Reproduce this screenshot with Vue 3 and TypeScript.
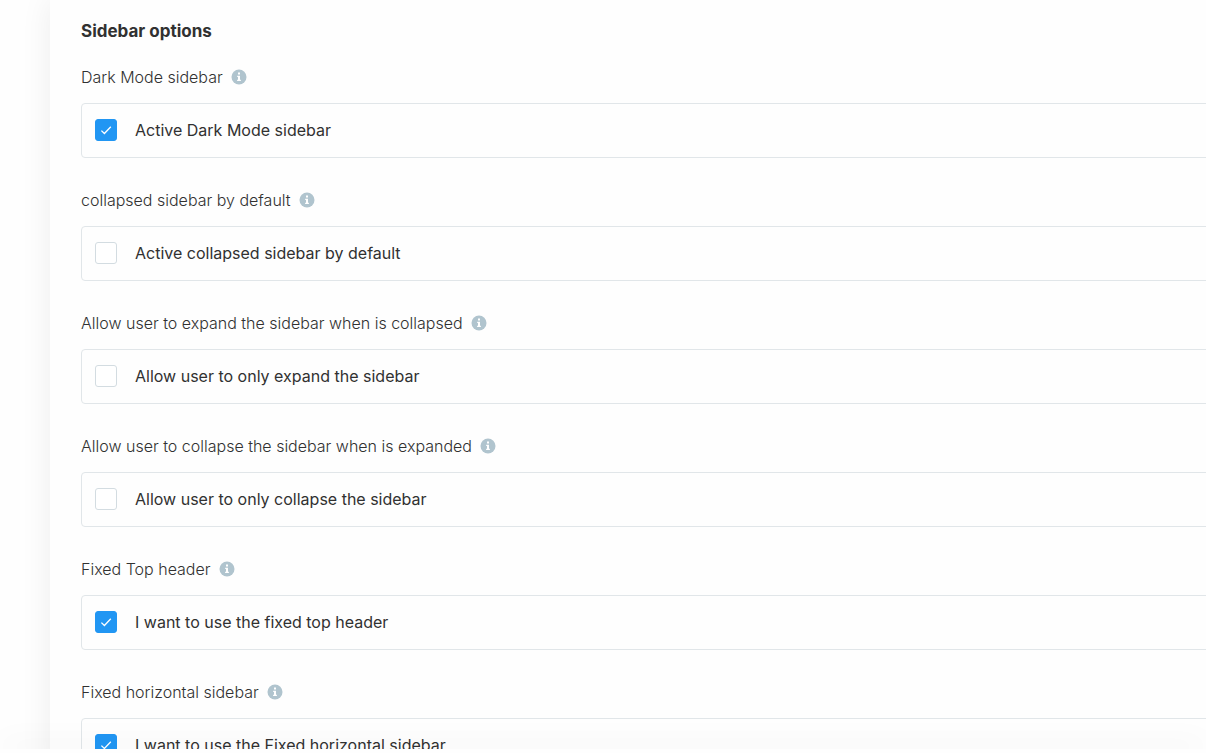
<script setup lang="ts">
import { ref } from 'vue'

interface Option {
  id: string
  title: string
  label: string
  checked: boolean
}

const options = ref<Option[]>([
  { id: 'dark-mode', title: 'Dark Mode sidebar', label: 'Active Dark Mode sidebar', checked: true },
  { id: 'collapsed', title: 'collapsed sidebar by default', label: 'Active collapsed sidebar by default', checked: false },
  { id: 'expand', title: 'Allow user to expand the sidebar when is collapsed', label: 'Allow user to only expand the sidebar', checked: false },
  { id: 'collapse', title: 'Allow user to collapse the sidebar when is expanded', label: 'Allow user to only collapse the sidebar', checked: false },
  { id: 'top-header', title: 'Fixed Top header', label: 'I want to use the fixed top header', checked: true },
  { id: 'horizontal', title: 'Fixed horizontal sidebar', label: 'I want to use the Fixed horizontal sidebar', checked: true },
])
</script>

<template>
  <div class="page">
    <div class="body">
      <main class="panel">
        <h2 class="heading">Sidebar options</h2>
        <section v-for="option in options" :key="option.id" class="group">
          <h3 class="title">
            <span>{{ option.title }}</span>
            <svg class="info" viewBox="0 0 16 16" aria-hidden="true">
              <circle cx="8" cy="8" r="7.5" fill="#b0c4ce" />
              <path d="M7 3.6h2v2H7zM6.2 6.7H9v4h.9v1.3H6.1v-1.3H7V8h-.8z" fill="#fff" />
            </svg>
          </h3>
          <label class="box" :for="option.id">
            <span class="tick">
              <input :id="option.id" v-model="option.checked" type="checkbox" class="check" />
              <svg v-if="option.checked" class="mark" viewBox="0 0 22 22" aria-hidden="true">
                <path d="M6.4 11.6l3 2.9 6.4-6.8" fill="none" stroke="#fff" stroke-width="1.3" />
              </svg>
            </span>
            <span>{{ option.label }}</span>
          </label>
        </section>
      </main>
    </div>
    <footer class="footer"></footer>
  </div>
</template>

<style>
body {
  background: #fefefe;
}
</style>

<style scoped>
.page {
  display: flex;
  flex-direction: column;
  height: 100vh;
  overflow: hidden;
  font-family: Inter, "Liberation Sans", sans-serif;
  font-size: 16px;
  line-height: 24px;
  color: #313131;
}

.body {
  flex: 1;
  min-height: 0;
  overflow: hidden;
  padding-left: 50px;
}

.panel {
  min-height: 100%;
  box-sizing: border-box;
  padding: 19px 0 0 31px;
  background: #fefefe;
  box-shadow: 0 0 30px rgba(0, 0, 0, 0.07);
}

.heading {
  margin: 0 0 22px;
  font-size: 17px;
  line-height: 24px;
  font-weight: 700;
}

.group {
  margin-bottom: 30px;
}

.title {
  display: flex;
  align-items: center;
  gap: 8px;
  margin: 0 0 14px;
  font-size: 16px;
  line-height: 24px;
  font-weight: 300;
}

.info {
  width: 16px;
  height: 16px;
}

.box {
  display: flex;
  align-items: center;
  gap: 18px;
  height: 55px;
  box-sizing: border-box;
  margin-right: -10px;
  padding: 0 0 2px 13px;
  border: 1px solid #e1e6e9;
  border-radius: 4px;
}

.tick {
  display: grid;
  width: 22px;
  height: 22px;
}

.check,
.mark {
  grid-area: 1 / 1;
  width: 22px;
  height: 22px;
}

.check {
  appearance: none;
  margin: 0;
  box-sizing: border-box;
  border: 1px solid #d3dce1;
  border-radius: 3px;
  background: #fff;
}

.check:checked {
  border-color: #2196f3;
  background: #2196f3;
}

.mark {
  position: relative;
  pointer-events: none;
}

.footer {
  position: relative;
  flex: none;
  height: 4px;
  background: #fefefe;
  box-shadow: 0 -4px 30px rgba(0, 0, 0, 0.12);
}
</style>
